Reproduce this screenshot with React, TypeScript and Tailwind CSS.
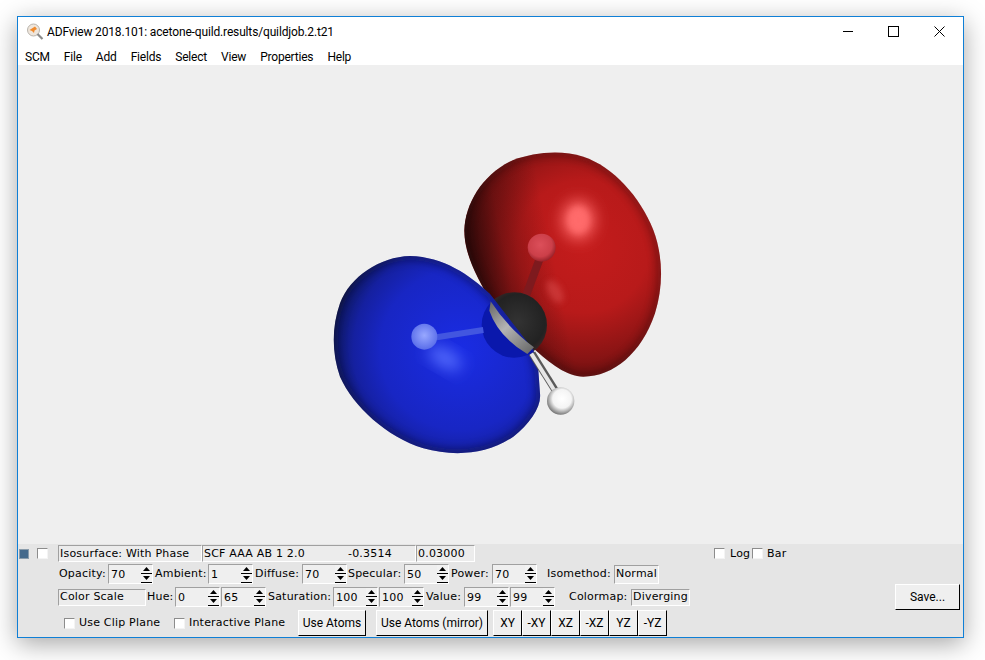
import type { ReactNode } from 'react'

const panelFont = "[font-family:'DejaVu_Sans',sans-serif]"

function Field({ width, children }: { width: string; children: ReactNode }) {
  return (
    <div className={`${width} flex h-full items-center overflow-hidden whitespace-pre border border-t-[#a0a0a0] border-l-[#a0a0a0] border-r-white border-b-white bg-[#ececec] pl-[1px] pt-[1px] text-[11px] tracking-[0.2px] text-black`}>
      {children}
    </div>
  )
}

function Spin({ value, className = '' }: { value: string; className?: string }) {
  return (
    <div className={`${className} flex h-[20px] w-[45px] shrink-0 border border-t-[#a0a0a0] border-l-[#a0a0a0] border-r-white border-b-white bg-[#efefef]`}>
      <span className="flex-1 pl-[2px] text-[11px] leading-[20px] tracking-[0.2px] text-black">{value}</span>
      <div className="flex w-[11px] flex-col">
        <div className="flex h-[9px] items-center justify-center border-b border-black bg-[#f2f2f2]">
          <svg width="7" height="4" viewBox="0 0 7 4"><path d="M3.5 0 7 4H0z" fill="#000" /></svg>
        </div>
        <div className="flex h-[9px] items-center justify-center border-b border-black bg-[#f2f2f2]">
          <svg width="7" height="4" viewBox="0 0 7 4"><path d="M0 0h7L3.5 4z" fill="#000" /></svg>
        </div>
      </div>
    </div>
  )
}

function Label({ width, children, className = '' }: { width: string; children: ReactNode; className?: string }) {
  return <span className={`${width} ${className} shrink-0 whitespace-nowrap pt-[1px] text-[11px] tracking-[0.2px] text-black`}>{children}</span>
}

function Check({ className = '' }: { className?: string }) {
  return <div className={`${className} h-[11px] w-[11px] shrink-0 border border-t-[#8c8c8c] border-l-[#8c8c8c] border-r-[#f4f4f4] border-b-[#f4f4f4] bg-white`} />
}

function Btn({ width, children, className = '' }: { width: string; children: ReactNode; className?: string }) {
  return (
    <button type="button" className={`${width} ${className} flex h-[26px] shrink-0 items-center justify-center border border-t-white border-l-white border-r-black border-b-black bg-[#efefef] font-['Roboto',sans-serif] text-[12px] text-black`}>
      {children}
    </button>
  )
}

function Molecule() {
  const red = 'M510 480C470 410 432 340 433 270C435 190 490 100 580 60C640 38 720 28 790 50C880 80 960 170 1000 270C1030 350 1030 440 1005 520C965 640 880 710 790 710C740 710 690 670 640 625Z'
  const blue = 'M510 462C450 405 370 350 270 348C180 350 90 410 60 490C35 560 35 640 60 710C100 800 200 890 310 925C400 950 500 945 580 890C630 850 665 800 660 760L655 690L640 630Z'
  return (
    <svg className="h-full w-full" viewBox="18 65 945 479">
      <defs>
        <radialGradient id="redFill" gradientUnits="userSpaceOnUse" cx="790" cy="320" r="440">
          <stop offset="0" stopColor="#c41c1c" />
          <stop offset="0.45" stopColor="#b81a1a" />
          <stop offset="0.75" stopColor="#8a1414" />
          <stop offset="1" stopColor="#5a0e0e" />
        </radialGradient>
        <linearGradient id="redShade" gradientUnits="userSpaceOnUse" x1="430" y1="300" x2="680" y2="250">
          <stop offset="0" stopColor="#120606" stopOpacity="0.8" />
          <stop offset="0.45" stopColor="#120606" stopOpacity="0.3" />
          <stop offset="1" stopColor="#120606" stopOpacity="0" />
        </linearGradient>
        <radialGradient id="blueFill" gradientUnits="userSpaceOnUse" cx="420" cy="630" r="400">
          <stop offset="0" stopColor="#1a2ce4" />
          <stop offset="0.6" stopColor="#1826c4" />
          <stop offset="0.8" stopColor="#1520a0" />
          <stop offset="0.93" stopColor="#0f1a6c" />
          <stop offset="1" stopColor="#0b0f30" />
        </radialGradient>
        <radialGradient id="carbonFill" cx="0.55" cy="0.45" r="0.6">
          <stop offset="0" stopColor="#333" />
          <stop offset="0.7" stopColor="#222" />
          <stop offset="1" stopColor="#4a2a2a" />
        </radialGradient>
        <radialGradient id="oxFill" cx="0.45" cy="0.4" r="0.6">
          <stop offset="0" stopColor="#dc4f5a" />
          <stop offset="0.7" stopColor="#cc3f49" />
          <stop offset="1" stopColor="#98222a" />
        </radialGradient>
        <radialGradient id="hFill" cx="0.55" cy="0.42" r="0.62">
          <stop offset="0" stopColor="#fff" />
          <stop offset="0.55" stopColor="#f4f4f4" />
          <stop offset="1" stopColor="#666" />
        </radialGradient>
        <radialGradient id="hBlueFill" cx="0.5" cy="0.45" r="0.6">
          <stop offset="0" stopColor="#98a8ff" />
          <stop offset="1" stopColor="#5468e8" />
        </radialGradient>
        <linearGradient id="bandFill" gradientUnits="userSpaceOnUse" x1="510" y1="490" x2="640" y2="630">
          <stop offset="0" stopColor="#6a6a6a" />
          <stop offset="0.45" stopColor="#b4b4b4" />
          <stop offset="1" stopColor="#6a6a6a" />
        </linearGradient>
        <filter id="blur1" x="-60%" y="-60%" width="220%" height="220%"><feGaussianBlur stdDeviation="22" /></filter>
        <filter id="blur2" x="-60%" y="-60%" width="220%" height="220%"><feGaussianBlur stdDeviation="10" /></filter>
        <filter id="blur3" x="-10%" y="-10%" width="120%" height="120%"><feGaussianBlur stdDeviation="12" /></filter>
        <clipPath id="redClip"><path d={red} /></clipPath>
        <clipPath id="blueClip"><path d={blue} /></clipPath>
        <clipPath id="carbonLeft"><path d="M400 400L512 480Q560 585 650 640L600 760L400 700Z" /></clipPath>
      </defs>
      <g transform="translate(320 140) scale(0.33333)">
        <path d={red} fill="url(#redFill)" />
        <g clipPath="url(#redClip)">
          <path d={red} fill="url(#redShade)" />
          <path d={red} fill="none" stroke="#1a0707" strokeWidth="24" opacity="0.35" filter="url(#blur3)" />
          <ellipse cx="775" cy="240" rx="48" ry="58" fill="#ff6a6a" filter="url(#blur1)" />
          <ellipse cx="775" cy="240" rx="30" ry="38" fill="#ff6a6a" filter="url(#blur2)" />
          <ellipse cx="705" cy="455" rx="20" ry="38" fill="#d8494a" opacity="0.6" transform="rotate(-30 705 455)" filter="url(#blur2)" />
        </g>
        <line x1="665" y1="340" x2="615" y2="475" stroke="#7e1a1e" strokeWidth="24" />
        <circle cx="665" cy="323" r="42" fill="url(#oxFill)" />
        <circle cx="583" cy="555" r="98" fill="url(#carbonFill)" />
        <path d={blue} fill="url(#blueFill)" />
        <g clipPath="url(#blueClip)">
          <path d={blue} fill="none" stroke="#0a0e30" strokeWidth="24" opacity="0.5" filter="url(#blur3)" />
          <ellipse cx="375" cy="655" rx="55" ry="24" fill="#5870ff" transform="rotate(30 375 655)" filter="url(#blur1)" />
        </g>
        <circle cx="583" cy="555" r="98" fill="#0a18ac" clipPath="url(#carbonLeft)" />
        <line x1="350" y1="592" x2="490" y2="570" stroke="#4256e0" strokeWidth="18" />
        <circle cx="313" cy="590" r="39" fill="url(#hBlueFill)" />
        <path d="M512 484Q560 560 642 622L622 642Q535 590 508 512Z" fill="url(#bandFill)" />
        <line x1="636" y1="640" x2="708" y2="755" stroke="#5a5a5a" strokeWidth="22" />
        <line x1="634" y1="641" x2="706" y2="756" stroke="#e6e6e6" strokeWidth="12" />
        <circle cx="722" cy="783" r="41" fill="url(#hFill)" />
      </g>
    </svg>
  )
}

export default function App() {
  return (
    <div className="h-[660px] w-[985px] overflow-hidden bg-white pl-[17px] pt-[16px]">
      <div className="flex h-[622px] w-[947px] flex-col border border-[#0f7fd6] bg-white shadow-[0_6px_24px_rgba(0,0,0,0.35)]">
        {/* title bar */}
        <div className="flex h-[29px] shrink-0 items-center pl-[8px] font-['Roboto',sans-serif] text-[12px] text-black">
          <svg width="18" height="18" viewBox="0 0 18 18" className="shrink-0">
            <circle cx="7.5" cy="7" r="6" fill="#efe6dc" stroke="#b9b4ac" />
            <path d="M3.5 7L9 3.5L11 6L8.5 7.5L8 10L6 8Z" fill="#f08a2c" />
            <line x1="11.5" y1="11" x2="16.5" y2="16" stroke="#8a8a8a" strokeWidth="2.2" />
          </svg>
          <span className="ml-[3px] tracking-[-0.15px]">ADFview 2018.101: acetone-quild.results/quildjob.2.t21</span>
          <div className="ml-auto flex items-center pr-[18px]">
            <svg width="11" height="11" viewBox="0 0 11 11"><line x1="0" y1="5.5" x2="10" y2="5.5" stroke="#000" /></svg>
            <svg width="11" height="11" viewBox="0 0 11 11" className="ml-[34px]"><rect x="0.5" y="0.5" width="10" height="10" fill="none" stroke="#000" /></svg>
            <svg width="11" height="11" viewBox="0 0 11 11" className="ml-[35px]"><path d="M0.5 0.5l10 10M10.5 0.5l-10 10" stroke="#000" /></svg>
          </div>
        </div>
        {/* menu */}
        <div className="flex h-[19px] shrink-0 items-center gap-[14px] pl-[7px] pt-[3px] font-['Roboto',sans-serif] text-[12px] tracking-[-0.2px] text-black">
          {['SCM', 'File', 'Add', 'Fields', 'Select', 'View', 'Properties', 'Help'].map((item) => (
            <span key={item}>{item}</span>
          ))}
        </div>
        {/* viewport */}
        <div className="h-[479px] shrink-0 bg-[#efefef]">
          <Molecule />
        </div>
        {/* controls */}
        <div className={`flex flex-1 flex-col bg-[#e5e5e5] pt-[1px] ${panelFont}`}>
          <div className="flex h-[17px] items-center">
            <div className="ml-[1px] h-[10px] w-[10px] border border-[#8a9cab] bg-[#456a8c]" />
            <Check className="ml-[8px]" />
            <div className="ml-[10px] flex h-full">
              <Field width="w-[144px]">Isosurface: With Phase</Field>
              <Field width="w-[214px]"><span className="w-[144px]">SCF AAA AB 1 2.0</span><span>-0.3514</span></Field>
              <Field width="w-[59px]">0.03000</Field>
            </div>
            <Check className="ml-[239px]" />
            <Label width="w-[22px]" className="ml-[5px]">Log</Label>
            <Check />
            <Label width="w-[30px]" className="ml-[4px]">Bar</Label>
          </div>
          <div className="mt-[2px] flex h-[20px] items-center pl-[40px]">
            <Label width="w-[50px]" className="pl-[1px]">Opacity:</Label>
            <Spin value="70" />
            <Label width="w-[55px]" className="pl-[2px]">Ambient:</Label>
            <Spin value="1" />
            <Label width="w-[49px]" className="pl-[2px]">Diffuse:</Label>
            <Spin value="70" />
            <Label width="w-[57px]" className="pl-[1px]">Specular:</Label>
            <Spin value="50" />
            <Label width="w-[43px]" className="pl-[2px]">Power:</Label>
            <Spin value="70" />
            <Label width="w-[67px]" className="ml-[10px]">Isomethod:</Label>
            <div className="h-[19px]"><Field width="w-[45px]">Normal</Field></div>
          </div>
          <div className="mt-[3px] flex h-[20px] items-center pl-[40px]">
            <div className="h-[17px]"><Field width="w-[88px]">Color Scale</Field></div>
            <Label width="w-[29px]" className="pl-[1px]">Hue:</Label>
            <Spin value="0" />
            <Spin value="65" className="ml-[1px]" />
            <Label width="w-[67px]" className="pl-[2px]">Saturation:</Label>
            <Spin value="100" />
            <Spin value="100" className="ml-[1px]" />
            <Label width="w-[40px]" className="pl-[2px]">Value:</Label>
            <Spin value="99" />
            <Spin value="99" className="ml-[1px]" />
            <Label width="w-[62px]" className="ml-[14px]">Colormap:</Label>
            <div className="h-[17px]"><Field width="w-[59px]">Diverging</Field></div>
            <Btn width="w-[65px]" className="-my-[3px] ml-auto mr-[3px]">Save...</Btn>
          </div>
          <div className="mt-[3px] flex h-[26px] items-center pl-[46px]">
            <Check />
            <Label width="w-[95px]" className="ml-[4px]">Use Clip Plane</Label>
            <Check />
            <Label width="w-[109px]" className="ml-[4px]">Interactive Plane</Label>
            <Btn width="w-[68px]">Use Atoms</Btn>
            <Btn width="w-[112px]" className="ml-[10px]">Use Atoms (mirror)</Btn>
            <Btn width="w-[29px]" className="ml-[5px]">XY</Btn>
            <Btn width="w-[29px]">-XY</Btn>
            <Btn width="w-[29px]">XZ</Btn>
            <Btn width="w-[29px]">-XZ</Btn>
            <Btn width="w-[29px]">YZ</Btn>
            <Btn width="w-[29px]">-YZ</Btn>
          </div>
        </div>
      </div>
    </div>
  )
}
